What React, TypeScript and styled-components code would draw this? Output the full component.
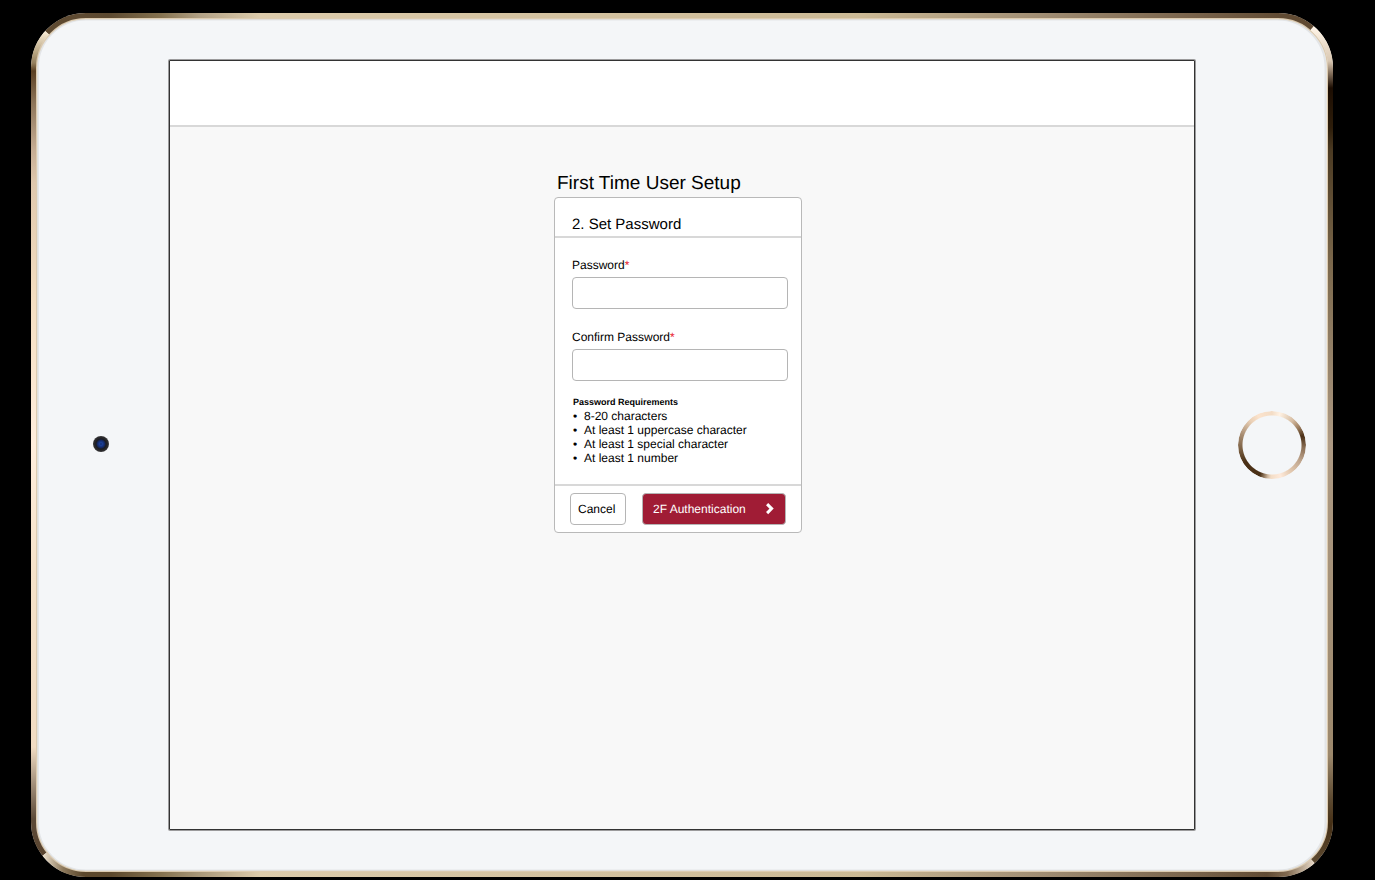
import React from "react";
import styled, { createGlobalStyle } from "styled-components";

const GlobalStyle = createGlobalStyle`
  *, *::before, *::after { box-sizing: border-box; }
  body {
    margin: 0;
    background: #000;
    color: #000;
    font-family: "Liberation Sans", Arial, sans-serif;
    text-rendering: geometricPrecision;
    overflow: hidden;
  }
  button, input { font: inherit; text-rendering: inherit; }
`;

const Stage = styled.div`
  width: 1375px;
  height: 880px;
  padding: 13px 42px 3px 31px;
`;

const Tablet = styled.div`
  position: relative;
  width: 1302px;
  height: 864px;
  padding: 47px 27px 47px 62px;
  border-radius: 55px;
  background: #f4f6f8;
  display: flex;
  align-items: flex-start;
`;

const Bezel = styled.svg`
  position: absolute;
  inset: 0;
  pointer-events: none;
`;

const Camera = styled.div`
  width: 16px;
  height: 16px;
  margin-top: 376px;
  border-radius: 50%;
  background: radial-gradient(circle, #17306b 0, #1b3f98 1.5px, #142a68 3.5px, #1b1c22 5px, #2c2c2e 7px, #3c3c3e 8px);
`;

const HomeButton = styled.div`
  width: 68px;
  height: 68px;
  margin: 351px 0 0 43px;
  border-radius: 50%;
  background: conic-gradient(
    #f3dcc5 0deg, #fff2e4 14deg, #d6bda3 40deg, #a38465 55deg, #4a2f17 74deg,
    #8b6f55 95deg, #c0a68e 120deg, #e3c9b0 145deg, #feeadb 165deg, #f3dcc5 182deg,
    #cdb59b 188deg, #4a3016 202deg, #4a3016 238deg, #7b6043 262deg, #a68b70 288deg,
    #e9cfb5 318deg, #fbe3cd 335deg, #f3dcc5 360deg
  );
  mask: radial-gradient(circle, transparent 29px, #000 30px);
`;

const Screen = styled.main`
  width: 1026px;
  height: 770px;
  margin-left: 60px;
  border: 1px solid #333;
  border-radius: 1px;
  box-shadow: 0 0 0 1px #9b9b9c;
  background: #f8f8f8;
  display: flex;
  flex-direction: column;
`;

const TopBar = styled.header`
  height: 66px;
  background: #fff;
  border-bottom: 2px solid #d8d8d8;
`;

const Setup = styled.section`
  width: 248px;
  margin: 43px 0 0 384px;
`;

const Title = styled.h1`
  margin: 0;
  padding-left: 3px;
  height: 27px;
  font-size: 19px;
  font-weight: 400;
  line-height: 28px;
`;

const Card = styled.form`
  height: 336px;
  border: 1px solid #b9b9b9;
  border-radius: 4px;
  background: #fff;
  display: flex;
  flex-direction: column;
`;

const CardHeader = styled.h2`
  margin: 0;
  height: 40px;
  padding: 17px 0 0 17px;
  border-bottom: 2px solid #d8d8d8;
  font-size: 15px;
  font-weight: 400;
  line-height: 20px;
`;

const CardBody = styled.div`
  flex: 1;
  padding: 20px 13px 0 17px;
`;

const Field = styled.label`
  display: block;
  height: 72px;
  font-size: 12px;
  line-height: 14px;
`;

const Required = styled.span`
  color: #e8192c;
`;

const Input = styled.input`
  display: block;
  width: 216px;
  height: 32px;
  margin-top: 5px;
  border: 1px solid #b5b5b5;
  border-radius: 4px;
  background: #fff;
  outline: none;
`;

const RequirementsTitle = styled.h3`
  margin: -7px 0 0 1px;
  font-size: 9px;
  font-weight: 700;
  line-height: 14px;
`;

const Requirements = styled.ul`
  margin: 0 0 0 1px;
  padding: 0;
  list-style: none;
`;

const Requirement = styled.li`
  display: flex;
  font-size: 12px;
  line-height: 14px;
  white-space: nowrap;

  &::before {
    content: "•";
    width: 11px;
  }
`;

const CardFooter = styled.footer`
  height: 48px;
  padding: 7px 15px 0;
  border-top: 2px solid #d8d8d8;
  display: flex;
  justify-content: space-between;
`;

const Button = styled.button<{ $primary?: boolean }>`
  height: 32px;
  width: ${(p) => (p.$primary ? 144 : 56)}px;
  padding: ${(p) => (p.$primary ? "0 10px" : "0 0 0 7px")};
  border: 1px solid #b5b5b5;
  border-radius: 4px;
  background: ${(p) => (p.$primary ? "#a01c35" : "#fff")};
  color: ${(p) => (p.$primary ? "#fff" : "#000")};
  font-size: 12px;
  line-height: 14px;
  display: flex;
  align-items: center;
  justify-content: ${(p) => (p.$primary ? "space-between" : "flex-start")};
`;

type Stop = [number, string];

/* Gradient stops are positions in tablet pixels along the edge. */
const topStops: Stop[] = [
  [54, "#5e4a31"], [78, "#5c4930"], [130, "#85724f"], [170, "#b3a286"], [229, "#dccbab"],
  [829, "#cbb995"], [1010, "#a08d73"], [1169, "#776149"], [1252, "#614b33"],
];
const bottomStops: Stop[] = [
  [14, "#e3d6c2"], [32, "#8d795c"], [52, "#5c482c"], [80, "#5c482c"], [130, "#85724f"],
  [170, "#aa997a"], [229, "#dccbab"], [829, "#cbb995"], [1010, "#a08d73"], [1169, "#776149"],
  [1236, "#614b33"], [1256, "#80694f"], [1284, "#eadccb"],
];
const leftStops: Stop[] = [
  [20, "#f4e7d0"], [40, "#b5a27f"], [50, "#95805e"], [58, "#5b4023"], [90, "#8d755a"],
  [137, "#c6ad94"], [170, "#dfc8ad"], [290, "#f5dfc2"], [430, "#ffeedd"], [560, "#f5e2c9"],
  [734, "#f1dcc3"], [770, "#a4917c"], [806, "#5c4a38"], [840, "#5a4530"],
];
const rightStops: Stop[] = [
  [14, "#fff5e8"], [48, "#dac8b2"], [60, "#86725e"], [75, "#1c0d02"], [115, "#2e1e0b"],
  [137, "#4b3a22"], [250, "#7b684c"], [432, "#ad9a84"], [742, "#9c886c"], [787, "#5c4930"],
  [812, "#452f15"], [845, "#5b482f"],
];

function EdgeGradient({ id, stops, vertical }: { id: string; stops: Stop[]; vertical?: boolean }) {
  const length = vertical ? 864 : 1302;
  return (
    <linearGradient
      id={id}
      gradientUnits="userSpaceOnUse"
      x1="0"
      y1="0"
      x2={vertical ? 0 : length}
      y2={vertical ? length : 0}
    >
      {stops.map(([at, color]) => (
        <stop key={at} offset={at / length} stopColor={color} />
      ))}
    </linearGradient>
  );
}

function TabletBezel() {
  return (
    <Bezel width="1302" height="864" viewBox="0 0 1302 864" fill="none" aria-hidden="true">
      <defs>
        <EdgeGradient id="top" stops={topStops} />
        <EdgeGradient id="bottom" stops={bottomStops} />
        <EdgeGradient id="left" stops={leftStops} vertical />
        <EdgeGradient id="right" stops={rightStops} vertical />
        <mask id="ring" maskUnits="userSpaceOnUse" x="0" y="0" width="1302" height="864">
          <rect x="2.5" y="2.5" width="1297" height="859" rx="52.5" stroke="#fff" strokeWidth="5" />
        </mask>
      </defs>
      <rect x="6.9" y="6.5" width="1287.6" height="851" rx="48" stroke="#e3e5e7" strokeWidth="2" />
      <rect x="5.5" y="5.5" width="1291" height="853" rx="49.5" stroke="#dccbb0" strokeWidth="1.4" />
      <g mask="url(#ring)">
        <path d="M55 55 -8 -2V-9H1302L1239 64Z" fill="url(#top)" />
        <path d="M55 55 -8 -2V858L55 809Z" fill="url(#left)" />
        <path d="M1239 64 1302 -9V871L1247 809Z" fill="url(#right)" />
        <path d="M55 809 -8 858V871H1302L1247 809Z" fill="url(#bottom)" />
      </g>
    </Bezel>
  );
}

function Chevron() {
  return (
    <svg width="10" height="12" viewBox="0 0 10 12" fill="none" aria-hidden="true">
      <path d="M2.1 1.1 6.6 5.6 2.1 10.1" stroke="#fff" strokeWidth="3" />
    </svg>
  );
}

const requirements = [
  "8-20 characters",
  "At least 1 uppercase character",
  "At least 1 special character",
  "At least 1 number",
];

export default function App() {
  return (
    <>
      <GlobalStyle />
      <Stage>
        <Tablet>
          <TabletBezel />
          <Camera />
          <Screen>
            <TopBar />
            <Setup>
              <Title>First Time User Setup</Title>
              <Card>
                <CardHeader>2. Set Password</CardHeader>
                <CardBody>
                  <Field>
                    Password<Required>*</Required>
                    <Input type="password" />
                  </Field>
                  <Field>
                    Confirm Password<Required>*</Required>
                    <Input type="password" />
                  </Field>
                  <RequirementsTitle>Password Requirements</RequirementsTitle>
                  <Requirements>
                    {requirements.map((text) => (
                      <Requirement key={text}>{text}</Requirement>
                    ))}
                  </Requirements>
                </CardBody>
                <CardFooter>
                  <Button type="button">Cancel</Button>
                  <Button type="button" $primary>
                    2F Authentication
                    <Chevron />
                  </Button>
                </CardFooter>
              </Card>
            </Setup>
          </Screen>
          <HomeButton />
        </Tablet>
      </Stage>
    </>
  );
}
